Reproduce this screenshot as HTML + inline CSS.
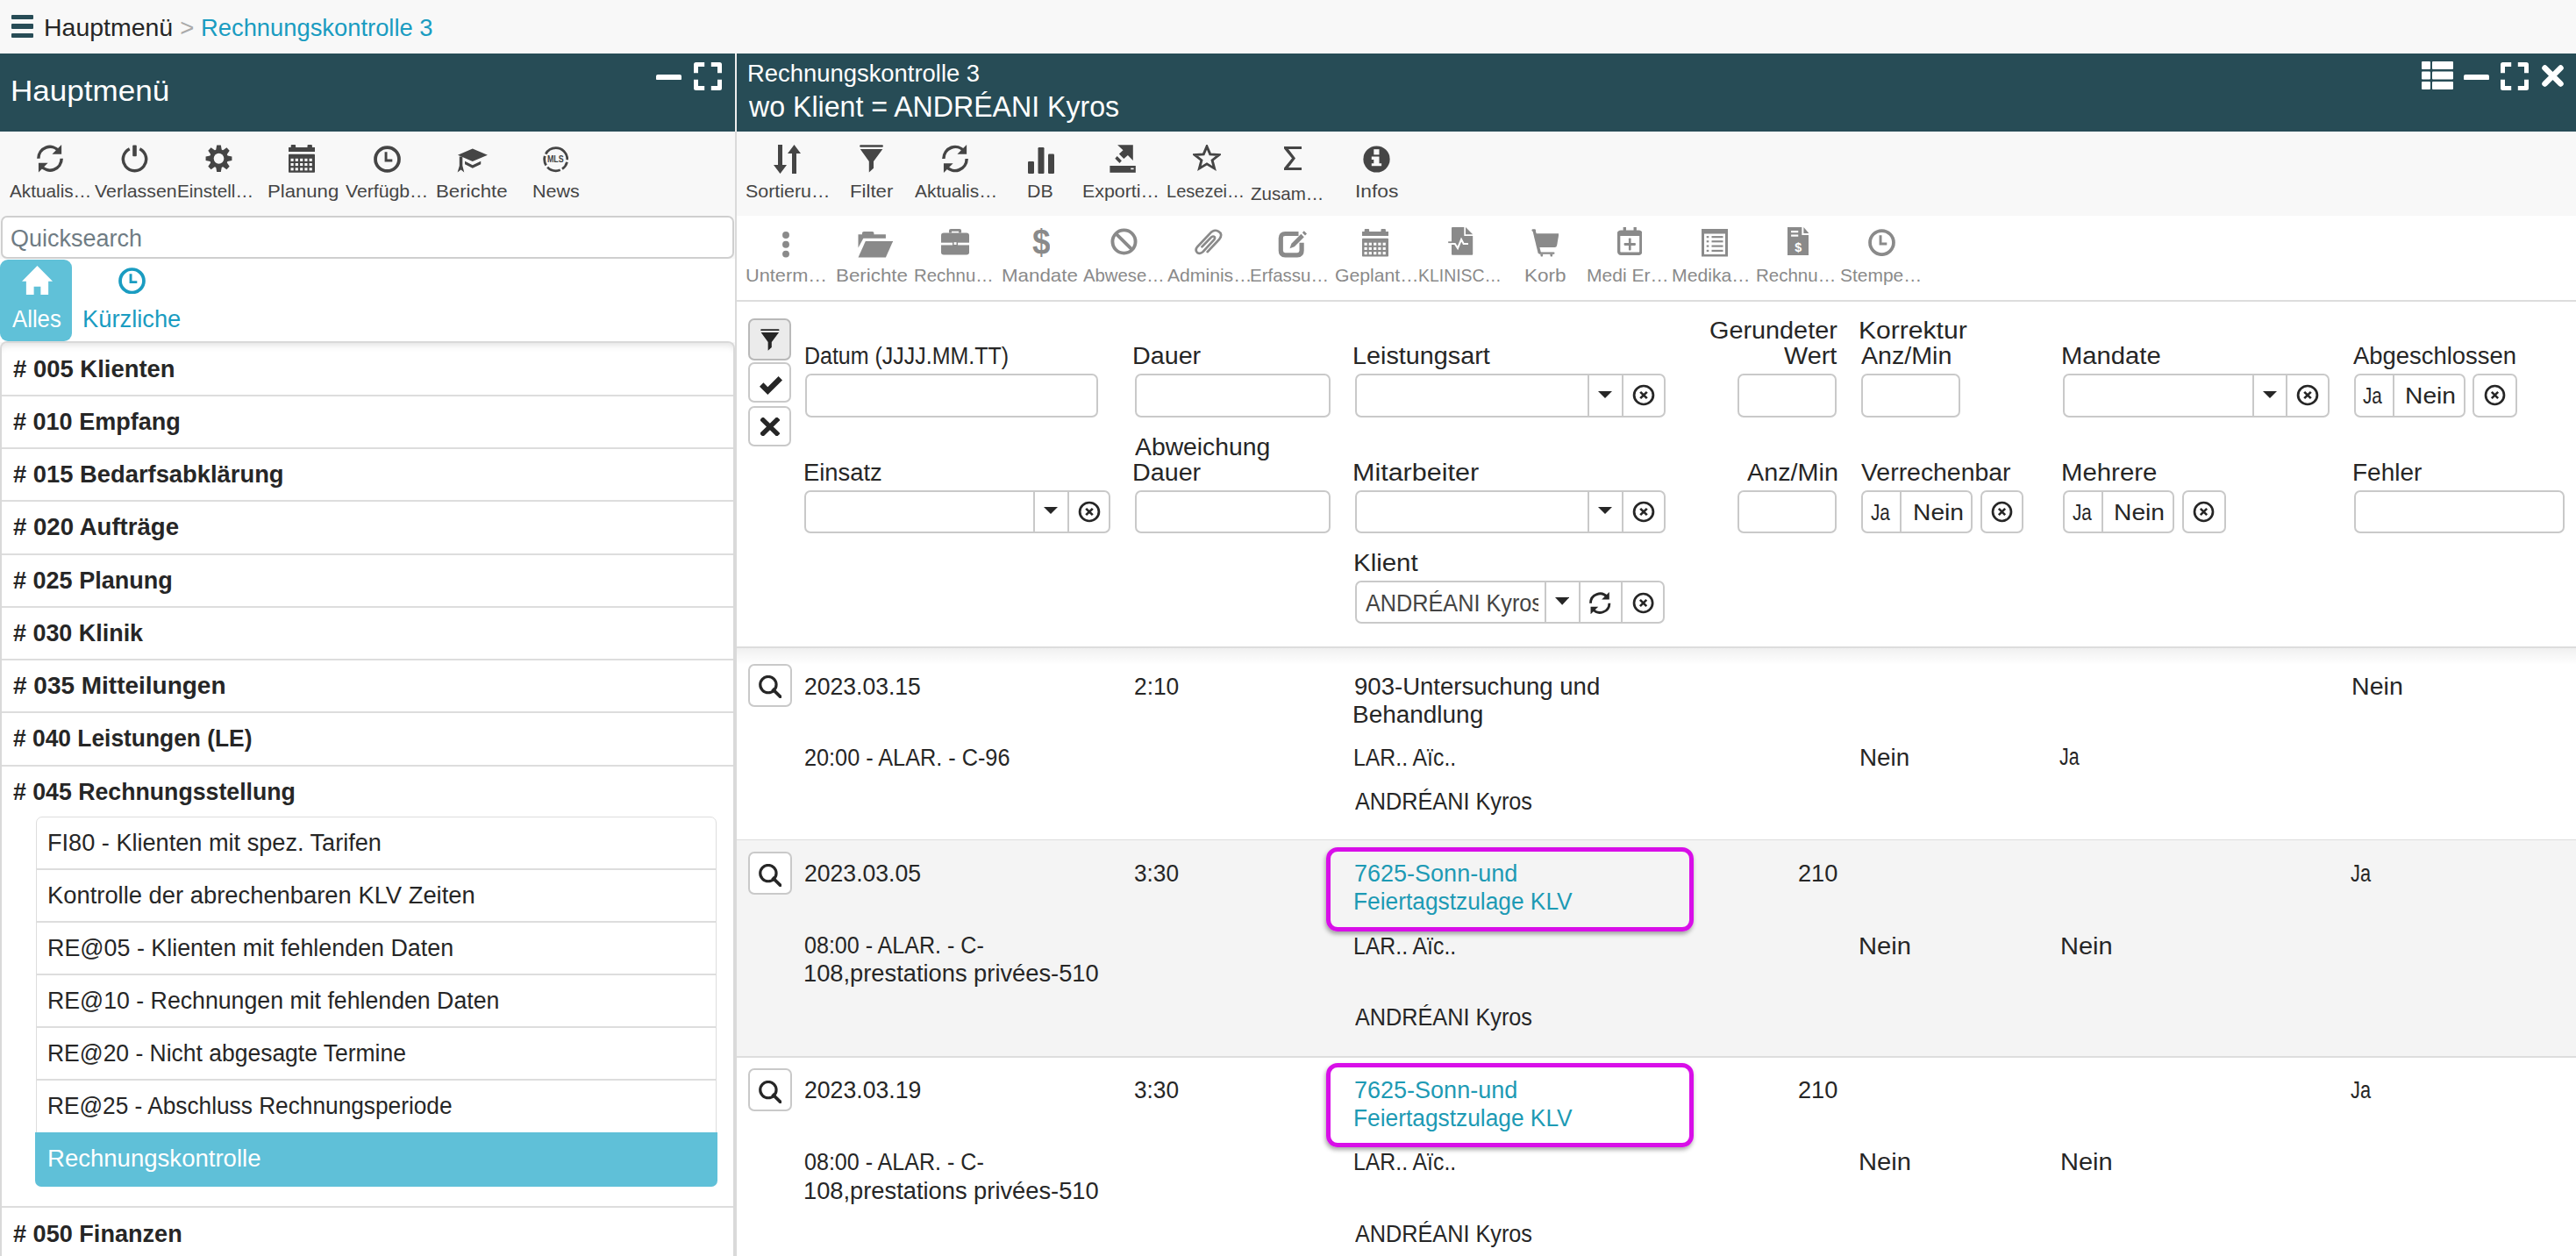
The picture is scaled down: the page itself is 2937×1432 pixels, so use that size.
<!DOCTYPE html>
<html><head><meta charset="utf-8"><title>Rechnungskontrolle 3</title>
<style>
html,body{margin:0;padding:0;}
body{width:2937px;height:1432px;overflow:hidden;position:relative;background:#f8f8f8;font-family:"Liberation Sans",sans-serif;}
.t{position:absolute;white-space:nowrap;}
.r{position:absolute;display:block;}
</style></head><body>
<div class="r" style="left:13.00px;top:17.00px;width:25.00px;height:5.00px;background:#274c56;border-radius:1px;"></div>
<div class="r" style="left:13.00px;top:27.00px;width:25.00px;height:5.50px;background:#274c56;border-radius:1px;"></div>
<div class="r" style="left:13.00px;top:37.50px;width:25.00px;height:5.20px;background:#274c56;border-radius:1px;"></div>
<div class="t" style="left:49.58px;top:17.54px;font-size:27.6px;line-height:27.6px;color:#262626;transform:scaleX(1.0318);transform-origin:0 0;">Hauptmenü</div>
<div class="t" style="left:205.25px;top:17.54px;font-size:27.6px;line-height:27.6px;color:#aaaaaa;transform:scaleX(1.0000);transform-origin:0 0;">&gt;</div>
<div class="t" style="left:229.27px;top:17.54px;font-size:27.6px;line-height:27.6px;color:#1a9cc1;transform:scaleX(0.9911);transform-origin:0 0;">Rechnungskontrolle 3</div>
<div class="r" style="left:0.00px;top:61.00px;width:838.00px;height:89.00px;background:#274c56;"></div>
<div class="t" style="left:11.86px;top:86.12px;font-size:34px;line-height:34px;color:#ffffff;transform:scaleX(1.0310);transform-origin:0 0;">Hauptmenü</div>
<svg class="r" style="left:748.00px;top:84.50px;width:29.00px;height:6.50px;" viewBox="0 0 29 6.5" preserveAspectRatio="none"><rect x="0" y="0" width="29" height="6.5" rx="2" fill="#fff"/></svg>
<svg class="r" style="left:791.00px;top:71.00px;width:32.00px;height:32.00px;" viewBox="0 0 32 32" preserveAspectRatio="none"><g fill="none" stroke="#fff" stroke-width="5" stroke-linecap="butt" stroke-linejoin="round"><path d="M2.5 12.2 V2.5 H12.2"/><path d="M19.8 2.5 H29.5 V12.2"/><path d="M2.5 19.8 V29.5 H12.2"/><path d="M19.8 29.5 H29.5 V19.8"/></g></svg>
<div class="r" style="left:838.00px;top:61.00px;width:2.00px;height:1371.00px;background:#dadada;"></div>
<div class="r" style="left:838.00px;top:61.00px;width:2.00px;height:89.00px;background:#eeeeee;"></div>
<div class="r" style="left:0.00px;top:150.00px;width:838.00px;height:240.00px;background:#f8f8f8;"></div>
<div class="r" style="left:0.00px;top:150.00px;width:838.00px;height:1.00px;background:#ffffff;"></div>
<svg class="r" style="left:42.00px;top:165.00px;width:31.00px;height:31.50px;" viewBox="0 0 32 32" preserveAspectRatio="none"><g fill="none" stroke="#454545" stroke-width="3.6"><path d="M1.9 16 A13.6 13.6 0 0 1 26 7.4"/><path d="M29.1 16 A13.6 13.6 0 0 1 5 24.6"/></g><path fill="#454545" d="M29 0 V10.8 H18 Z"/><path fill="#454545" d="M2 32 V21.2 H13 Z"/></svg>
<svg class="r" style="left:138.00px;top:164.50px;width:31.00px;height:32.00px;" viewBox="0 0 31 32" preserveAspectRatio="none"><path d="M9.7 4.7 A13.15 13.15 0 1 0 21.3 4.7" fill="none" stroke="#454545" stroke-width="3.5"/><rect x="13.2" y="0.6" width="4.6" height="12.6" rx="1" fill="#454545"/></svg>
<svg class="r" style="left:234.00px;top:165.00px;width:31.00px;height:31.50px;" viewBox="0 0 32 32" preserveAspectRatio="none"><g fill="#454545"><path d="M13.6 0.6 H18.4 L19.6 7 H12.4 Z M12.4 25 H19.6 L18.4 31.4 H13.6 Z" transform="rotate(0 16 16)"/><path d="M13.6 0.6 H18.4 L19.6 7 H12.4 Z M12.4 25 H19.6 L18.4 31.4 H13.6 Z" transform="rotate(45 16 16)"/><path d="M13.6 0.6 H18.4 L19.6 7 H12.4 Z M12.4 25 H19.6 L18.4 31.4 H13.6 Z" transform="rotate(90 16 16)"/><path d="M13.6 0.6 H18.4 L19.6 7 H12.4 Z M12.4 25 H19.6 L18.4 31.4 H13.6 Z" transform="rotate(135 16 16)"/><circle cx="16" cy="16" r="10.7"/></g><circle cx="16" cy="16" r="6" fill="#f8f8f8"/></svg>
<svg class="r" style="left:329.30px;top:165.00px;width:30.00px;height:32.00px;" viewBox="0 0 30 32" preserveAspectRatio="none"><g fill="#454545"><rect x="0" y="3" width="30" height="5" /><rect x="0" y="10.8" width="30" height="21" rx="0.8"/><rect x="2.7" y="0" width="5.4" height="4" rx="1"/><rect x="21.5" y="0" width="5.4" height="4" rx="1"/></g><g fill="#f8f8f8"><rect x="2.5" y="15.8" width="3.2" height="3.1"/><rect x="7.7" y="15.8" width="3.2" height="3.1"/><rect x="13.1" y="15.8" width="3.2" height="3.1"/><rect x="18.3" y="15.8" width="3.2" height="3.1"/><rect x="23.6" y="15.8" width="3.2" height="3.1"/><rect x="2.5" y="21.0" width="3.2" height="3.1"/><rect x="7.7" y="21.0" width="3.2" height="3.1"/><rect x="13.1" y="21.0" width="3.2" height="3.1"/><rect x="18.3" y="21.0" width="3.2" height="3.1"/><rect x="23.6" y="21.0" width="3.2" height="3.1"/><rect x="2.5" y="26.3" width="3.2" height="3.1"/><rect x="7.7" y="26.3" width="3.2" height="3.1"/><rect x="13.1" y="26.3" width="3.2" height="3.1"/><rect x="18.3" y="26.3" width="3.2" height="3.1"/><rect x="23.6" y="26.3" width="3.2" height="3.1"/></g></svg>
<svg class="r" style="left:426.00px;top:165.50px;width:31.00px;height:31.00px;" viewBox="0 0 32 32" preserveAspectRatio="none"><circle cx="16" cy="16" r="13.9" fill="none" stroke="#454545" stroke-width="3.9"/><path d="M14.5 7.5 V17.5 H22" fill="none" stroke="#454545" stroke-width="3"/></svg>
<svg class="r" style="left:521.00px;top:168.50px;width:35.00px;height:28.00px;" viewBox="0 0 36 28" preserveAspectRatio="none"><g fill="#454545"><path d="M18.3 0.4 L35.9 7.7 L18.3 15 L1 7.7 Z"/><path d="M9.3 14.7 L18.3 19.2 L28 14.7 V18.3 L18.3 22.8 L9.3 18.3 Z"/><path d="M2.9 9.5 H6.5 V19.9 L8.5 27.6 L4.7 24.5 L0.6 27.6 L2.9 19.9 Z"/></g></svg>
<svg class="r" style="left:618.50px;top:167.00px;width:29.50px;height:29.50px;" viewBox="0 0 30 30" preserveAspectRatio="none"><circle cx="15" cy="15" r="13.3" fill="none" stroke="#454545" stroke-width="2.8" stroke-dasharray="0.54 2.6 9.84 2.6 16.05 2.6 11.22 2.6 34.85 0"/><text x="14.6" y="18.6" font-family="Liberation Sans" font-weight="700" font-size="11.5" text-anchor="middle" fill="#454545" textLength="19" lengthAdjust="spacingAndGlyphs">MLS</text></svg>
<div class="t" style="left:11.40px;top:207.02px;font-size:21px;line-height:21px;color:#454545;transform:scaleX(0.9875);transform-origin:0 0;">Aktualis…</div>
<div class="t" style="left:107.60px;top:207.02px;font-size:21px;line-height:21px;color:#454545;transform:scaleX(1.0149);transform-origin:0 0;">Verlassen</div>
<div class="t" style="left:202.28px;top:207.02px;font-size:21px;line-height:21px;color:#454545;transform:scaleX(0.9816);transform-origin:0 0;">Einstell…</div>
<div class="t" style="left:305.16px;top:207.02px;font-size:21px;line-height:21px;color:#454545;transform:scaleX(1.0541);transform-origin:0 0;">Planung</div>
<div class="t" style="left:394.00px;top:207.02px;font-size:21px;line-height:21px;color:#454545;transform:scaleX(1.0094);transform-origin:0 0;">Verfügb…</div>
<div class="t" style="left:497.15px;top:207.02px;font-size:21px;line-height:21px;color:#454545;transform:scaleX(1.0586);transform-origin:0 0;">Berichte</div>
<div class="t" style="left:606.71px;top:207.02px;font-size:21px;line-height:21px;color:#454545;transform:scaleX(1.0240);transform-origin:0 0;">News</div>
<div class="r" style="left:1.00px;top:246.30px;width:836.00px;height:49.00px;background:#ffffff;box-sizing:border-box;border:2px solid #cfcfcf;border-radius:7px;"></div>
<div class="t" style="left:12.25px;top:259.04px;font-size:27px;line-height:27px;color:#6f7c84;transform:scaleX(0.9993);transform-origin:0 0;">Quicksearch</div>
<div class="r" style="left:0.00px;top:295.00px;width:838.00px;height:95.00px;background:#ffffff;"></div>
<div class="r" style="left:0.00px;top:296.00px;width:82.00px;height:92.50px;background:#60c1d8;border-radius:9px;"></div>
<svg class="r" style="left:25.00px;top:302.50px;width:35.00px;height:33.50px;" viewBox="0 0 36 34" preserveAspectRatio="none"><path fill="#ffffff" d="M18 0 L36 18 H31 V34 H22 V24 H14 V34 H5 V18 H0 Z"/></svg>
<div class="t" style="left:13.50px;top:351.04px;font-size:27px;line-height:27px;color:#ffffff;transform:scaleX(0.9530);transform-origin:0 0;">Alles</div>
<svg class="r" style="left:135.00px;top:304.50px;width:31.00px;height:30.50px;" viewBox="0 0 32 32" preserveAspectRatio="none"><circle cx="16" cy="16" r="13.9" fill="none" stroke="#1a9cc1" stroke-width="3.9"/><path d="M14.5 7.5 V17.5 H22" fill="none" stroke="#1a9cc1" stroke-width="3"/></svg>
<div class="t" style="left:94.02px;top:351.04px;font-size:27px;line-height:27px;color:#1a9cc1;transform:scaleX(1.0112);transform-origin:0 0;">Kürzliche</div>
<div class="r" style="left:0.00px;top:389.00px;width:838.00px;height:1051.00px;background:#ffffff;box-sizing:border-box;border:2px solid #d9d9d9;border-bottom:none;border-radius:8px 8px 0 0;box-shadow:inset 0 9px 9px -7px rgba(0,0,0,0.13);"></div>
<div class="t" style="left:14.99px;top:407.74px;font-size:27px;line-height:27px;color:#262626;transform:scaleX(1.0165);transform-origin:0 0;font-weight:700;"># 005 Klienten</div>
<div class="r" style="left:2.00px;top:449.75px;width:834.00px;height:2.20px;background:#dddddd;"></div>
<div class="t" style="left:15.00px;top:467.99px;font-size:27px;line-height:27px;color:#262626;transform:scaleX(1.0008);transform-origin:0 0;font-weight:700;"># 010 Empfang</div>
<div class="r" style="left:2.00px;top:510.00px;width:834.00px;height:2.20px;background:#dddddd;"></div>
<div class="t" style="left:14.99px;top:528.24px;font-size:27px;line-height:27px;color:#262626;transform:scaleX(1.0129);transform-origin:0 0;font-weight:700;"># 015 Bedarfsabklärung</div>
<div class="r" style="left:2.00px;top:570.25px;width:834.00px;height:2.20px;background:#dddddd;"></div>
<div class="t" style="left:14.99px;top:588.49px;font-size:27px;line-height:27px;color:#262626;transform:scaleX(1.0213);transform-origin:0 0;font-weight:700;"># 020 Aufträge</div>
<div class="r" style="left:2.00px;top:630.50px;width:834.00px;height:2.20px;background:#dddddd;"></div>
<div class="t" style="left:15.00px;top:648.74px;font-size:27px;line-height:27px;color:#262626;transform:scaleX(1.0014);transform-origin:0 0;font-weight:700;"># 025 Planung</div>
<div class="r" style="left:2.00px;top:690.75px;width:834.00px;height:2.20px;background:#dddddd;"></div>
<div class="t" style="left:15.00px;top:708.99px;font-size:27px;line-height:27px;color:#262626;transform:scaleX(0.9966);transform-origin:0 0;font-weight:700;"># 030 Klinik</div>
<div class="r" style="left:2.00px;top:751.00px;width:834.00px;height:2.20px;background:#dddddd;"></div>
<div class="t" style="left:14.98px;top:769.24px;font-size:27px;line-height:27px;color:#262626;transform:scaleX(1.0360);transform-origin:0 0;font-weight:700;"># 035 Mitteilungen</div>
<div class="r" style="left:2.00px;top:811.25px;width:834.00px;height:2.20px;background:#dddddd;"></div>
<div class="t" style="left:15.01px;top:829.49px;font-size:27px;line-height:27px;color:#262626;transform:scaleX(0.9764);transform-origin:0 0;font-weight:700;"># 040 Leistungen (LE)</div>
<div class="r" style="left:2.00px;top:871.50px;width:834.00px;height:2.20px;background:#dddddd;"></div>
<div class="t" style="left:15.01px;top:889.74px;font-size:27px;line-height:27px;color:#262626;transform:scaleX(0.9887);transform-origin:0 0;font-weight:700;"># 045 Rechnungsstellung</div>
<div class="r" style="left:40.80px;top:931.00px;width:776.20px;height:421.50px;background:#ffffff;box-sizing:border-box;border:1.5px solid #dddddd;border-radius:7px;"></div>
<div class="t" style="left:53.74px;top:948.34px;font-size:27px;line-height:27px;color:#262626;transform:scaleX(1.0047);transform-origin:0 0;">FI80 - Klienten mit spez. Tarifen</div>
<div class="r" style="left:41.50px;top:990.00px;width:774.50px;height:2.20px;background:#dddddd;"></div>
<div class="t" style="left:53.72px;top:1008.34px;font-size:27px;line-height:27px;color:#262626;transform:scaleX(1.0133);transform-origin:0 0;">Kontrolle der abrechenbaren KLV Zeiten</div>
<div class="r" style="left:41.50px;top:1050.00px;width:774.50px;height:2.20px;background:#dddddd;"></div>
<div class="t" style="left:53.76px;top:1068.34px;font-size:27px;line-height:27px;color:#262626;transform:scaleX(0.9945);transform-origin:0 0;">RE@05 - Klienten mit fehlenden Daten</div>
<div class="r" style="left:41.50px;top:1110.00px;width:774.50px;height:2.20px;background:#dddddd;"></div>
<div class="t" style="left:53.78px;top:1128.34px;font-size:27px;line-height:27px;color:#262626;transform:scaleX(0.9887);transform-origin:0 0;">RE@10 - Rechnungen mit fehlenden Daten</div>
<div class="r" style="left:41.50px;top:1170.00px;width:774.50px;height:2.20px;background:#dddddd;"></div>
<div class="t" style="left:53.79px;top:1188.34px;font-size:27px;line-height:27px;color:#262626;transform:scaleX(0.9804);transform-origin:0 0;">RE@20 - Nicht abgesagte Termine</div>
<div class="r" style="left:41.50px;top:1230.00px;width:774.50px;height:2.20px;background:#dddddd;"></div>
<div class="t" style="left:53.81px;top:1248.34px;font-size:27px;line-height:27px;color:#262626;transform:scaleX(0.9723);transform-origin:0 0;">RE@25 - Abschluss Rechnungsperiode</div>
<div class="r" style="left:40.00px;top:1291.00px;width:778.00px;height:61.50px;background:#5fc0d8;border-radius:0 0 7px 7px;"></div>
<div class="t" style="left:53.70px;top:1308.34px;font-size:27px;line-height:27px;color:#ffffff;transform:scaleX(1.0202);transform-origin:0 0;">Rechnungskontrolle</div>
<div class="r" style="left:2.00px;top:1375.00px;width:834.00px;height:2.20px;background:#dddddd;"></div>
<div class="t" style="left:15.10px;top:1394.04px;font-size:27px;line-height:27px;color:#262626;transform:scaleX(1.0034);transform-origin:0 0;font-weight:700;"># 050 Finanzen</div>
<div class="r" style="left:840.00px;top:61.00px;width:2097.00px;height:89.00px;background:#274c56;"></div>
<div class="t" style="left:852.02px;top:71.14px;font-size:27px;line-height:27px;color:#ffffff;transform:scaleX(1.0149);transform-origin:0 0;">Rechnungskontrolle 3</div>
<div class="t" style="left:853.90px;top:104.67px;font-size:33px;line-height:33px;color:#ffffff;transform:scaleX(0.9732);transform-origin:0 0;">wo Klient = ANDRÉANI Kyros</div>
<svg class="r" style="left:2761.00px;top:70.00px;width:36.00px;height:32.00px;" viewBox="0 0 36 32" preserveAspectRatio="none"><g fill="#fff"><rect x="0" y="0" width="10" height="9" rx="1"/><rect x="12" y="0" width="24" height="9" rx="1"/><rect x="0" y="11.5" width="10" height="9" rx="1"/><rect x="12" y="11.5" width="24" height="9" rx="1"/><rect x="0" y="23" width="10" height="9" rx="1"/><rect x="12" y="23" width="24" height="9" rx="1"/></g></svg>
<svg class="r" style="left:2809.00px;top:84.80px;width:29.00px;height:6.50px;" viewBox="0 0 29 6.5" preserveAspectRatio="none"><rect x="0" y="0" width="29" height="6.5" rx="2" fill="#fff"/></svg>
<svg class="r" style="left:2851.00px;top:71.00px;width:32.00px;height:32.00px;" viewBox="0 0 32 32" preserveAspectRatio="none"><g fill="none" stroke="#fff" stroke-width="5" stroke-linecap="butt" stroke-linejoin="round"><path d="M2.5 12.2 V2.5 H12.2"/><path d="M19.8 2.5 H29.5 V12.2"/><path d="M2.5 19.8 V29.5 H12.2"/><path d="M19.8 29.5 H29.5 V19.8"/></g></svg>
<svg class="r" style="left:2897.50px;top:74.30px;width:25.00px;height:25.00px;" viewBox="0 0 25 25" preserveAspectRatio="none"><path d="M3.5 3.5 L21.5 21.5 M21.5 3.5 L3.5 21.5" stroke="#fff" stroke-width="6.5" stroke-linecap="round"/></svg>
<div class="r" style="left:840.00px;top:150.00px;width:2097.00px;height:96.00px;background:#f8f8f8;"></div>
<div class="r" style="left:840.00px;top:150.00px;width:2097.00px;height:1.00px;background:#ffffff;"></div>
<svg class="r" style="left:882.00px;top:164.50px;width:31.00px;height:33.00px;" viewBox="0 0 31 33" preserveAspectRatio="none"><g fill="#454545"><path d="M5 0 H10 V23 H15 L7.5 33 L0 23 H5 Z"/><path d="M21 33 H26 V10 H31 L23.5 0 L16 10 H21 Z"/></g></svg>
<svg class="r" style="left:980.00px;top:165.00px;width:27.00px;height:33.00px;" viewBox="0 0 27 33" preserveAspectRatio="none"><g fill="#454545"><rect x="0.2" y="0.3" width="26.7" height="2.4" rx="1.2"/><path d="M0.8 5.1 H26.3 L16 19 V26.7 L10.8 31.5 V19 Z"/></g></svg>
<svg class="r" style="left:1074.00px;top:165.00px;width:31.00px;height:32.00px;" viewBox="0 0 32 32" preserveAspectRatio="none"><g fill="none" stroke="#454545" stroke-width="3.6"><path d="M1.9 16 A13.6 13.6 0 0 1 26 7.4"/><path d="M29.1 16 A13.6 13.6 0 0 1 5 24.6"/></g><path fill="#454545" d="M29 0 V10.8 H18 Z"/><path fill="#454545" d="M2 32 V21.2 H13 Z"/></svg>
<svg class="r" style="left:1172.00px;top:167.50px;width:30.00px;height:30.00px;" viewBox="0 0 30 32" preserveAspectRatio="none"><g fill="#454545"><rect x="0" y="17" width="7" height="15" rx="1.2"/><rect x="11.5" y="0" width="7" height="32" rx="1.2"/><rect x="23" y="8" width="7" height="24" rx="1.2"/></g></svg>
<svg class="r" style="left:1265.00px;top:165.00px;width:30.00px;height:32.00px;" viewBox="0 0 30 32" preserveAspectRatio="none"><g fill="#454545"><rect x="0.4" y="24" width="29.4" height="7.8"/><path d="M9.1 0.2 H26.8 V17.9 L20.9 11.9 L16.3 15.9 L10.9 10.5 L15.5 6.3 Z"/><path d="M8.7 13.1 L13.9 18.3 L11.5 20.9 L6.3 15.7 Z"/></g><rect x="24.2" y="26.6" width="3.4" height="1.6" fill="#f8f8f8"/></svg>
<svg class="r" style="left:1360.00px;top:165.00px;width:32.00px;height:30.50px;" viewBox="0 0 32 32" preserveAspectRatio="none"><polygon points="16.00,2.00 19.76,11.42 29.89,12.09 22.09,18.58 24.58,28.41 16.00,23.00 7.42,28.41 9.91,18.58 2.11,12.09 12.24,11.42" fill="none" stroke="#454545" stroke-width="2.9" stroke-linejoin="miter" stroke-miterlimit="10"/></svg>
<svg class="r" style="left:1464.00px;top:167.00px;width:20.00px;height:27.00px;" viewBox="0 0 20 27" preserveAspectRatio="none"><path fill="#454545" d="M0 0 H20 V3 H5 L13 13.5 L5 24 H20 V27 H0 V24.5 L9 13.5 L0 2.5 Z"/></svg>
<svg class="r" style="left:1554.00px;top:165.50px;width:31.00px;height:31.00px;" viewBox="0 0 32 32" preserveAspectRatio="none"><circle cx="16" cy="16" r="15.6" fill="#454545"/><rect x="12.7" y="4.3" width="6.4" height="6.4" fill="#f8f8f8"/><path fill="#f8f8f8" d="M10.1 12.8 H19.1 V20.8 H21.8 V24 H10.1 V20.8 H12.7 V16.4 H10.1 Z"/></svg>
<div class="t" style="left:849.98px;top:207.22px;font-size:21px;line-height:21px;color:#454545;transform:scaleX(1.0193);transform-origin:0 0;">Sortieru…</div>
<div class="t" style="left:968.55px;top:207.22px;font-size:21px;line-height:21px;color:#454545;transform:scaleX(1.0570);transform-origin:0 0;">Filter</div>
<div class="t" style="left:1043.00px;top:207.22px;font-size:21px;line-height:21px;color:#454545;transform:scaleX(0.9951);transform-origin:0 0;">Aktualis…</div>
<div class="t" style="left:1170.82px;top:207.22px;font-size:21px;line-height:21px;color:#454545;transform:scaleX(1.0151);transform-origin:0 0;">DB</div>
<div class="t" style="left:1233.72px;top:207.22px;font-size:21px;line-height:21px;color:#454545;transform:scaleX(1.0165);transform-origin:0 0;">Exporti…</div>
<div class="t" style="left:1330.03px;top:207.22px;font-size:21px;line-height:21px;color:#454545;transform:scaleX(0.9528);transform-origin:0 0;">Lesezei…</div>
<div class="t" style="left:1426.27px;top:210.22px;font-size:21px;line-height:21px;color:#454545;transform:scaleX(0.9786);transform-origin:0 0;">Zusam…</div>
<div class="t" style="left:1544.83px;top:207.22px;font-size:21px;line-height:21px;color:#454545;transform:scaleX(1.0854);transform-origin:0 0;">Infos</div>
<div class="r" style="left:840.00px;top:246.00px;width:2097.00px;height:96.00px;background:#ffffff;"></div>
<div class="r" style="left:840.00px;top:342.00px;width:2097.00px;height:2.00px;background:#dddddd;"></div>
<svg class="r" style="left:892.00px;top:263.60px;width:8.00px;height:30.00px;" viewBox="0 0 8 30" preserveAspectRatio="none"><g fill="#8a8a8a"><circle cx="4" cy="4" r="3.95"/><circle cx="4" cy="14.8" r="3.95"/><circle cx="4" cy="25.6" r="3.95"/></g></svg>
<svg class="r" style="left:977.50px;top:263.50px;width:40.50px;height:30.00px;" viewBox="0 0 40.5 30" preserveAspectRatio="none"><g fill="#8a8a8a"><path d="M0.5 3.2 H5 V1.5 Q5 0 7 0 H16.5 Q18.4 0 18.4 1.5 V3.2 H31.9 V7.7 H6.3 L0.5 18.6 Z"/><path d="M8.8 10.9 H40.2 L31.9 29.5 H0.5 Z"/></g></svg>
<svg class="r" style="left:1073.40px;top:261.00px;width:32.10px;height:29.50px;" viewBox="0 0 32 32" preserveAspectRatio="none"><g fill="#8a8a8a"><path d="M11 0 H21 Q23 0 23 2 V5 H20 V3 H12 V5 H9 V2 Q9 0 11 0 Z"/><rect x="0" y="5" width="32" height="27" rx="3"/></g><rect x="0" y="17" width="32" height="3" fill="#ffffff"/><rect x="13" y="15" width="6" height="6" fill="#8a8a8a"/><rect x="14.5" y="16.5" width="3" height="3" fill="#ffffff"/></svg>
<svg class="r" style="left:1176.50px;top:259.80px;width:20.50px;height:33.60px;" viewBox="0 0 20 32" preserveAspectRatio="none"><text x="10" y="29" font-family="Liberation Sans" font-weight="700" font-size="38" text-anchor="middle" fill="#8a8a8a" textLength="20" lengthAdjust="spacingAndGlyphs">$</text></svg>
<svg class="r" style="left:1266.00px;top:259.50px;width:31.00px;height:31.00px;" viewBox="0 0 32 32" preserveAspectRatio="none"><circle cx="16" cy="16" r="13.5" fill="none" stroke="#8a8a8a" stroke-width="4"/><path d="M6.5 6.5 L25.5 25.5" stroke="#8a8a8a" stroke-width="4"/></svg>
<svg class="r" style="left:1360.50px;top:261.00px;width:33.50px;height:30.00px;" viewBox="0 0 32 31" preserveAspectRatio="none"><path d="M15 27 L28 12 Q32 6 27 3 Q22 0 18 5 L4 21 Q1 25 4 28 Q7 30 10 27 L22 13 Q24 10 22 9 Q20 8 18 11 L9 21" fill="none" stroke="#8a8a8a" stroke-width="2.6" stroke-linecap="round"/></svg>
<svg class="r" style="left:1457.00px;top:262.50px;width:33.00px;height:31.00px;" viewBox="0 0 33 31" preserveAspectRatio="none"><path d="M23.5 3.5 H8.3 Q3.3 3.5 3.3 8.5 V22.8 Q3.3 27.8 8.3 27.8 H22.1 Q27.1 27.8 27.1 22.8 V13.8" fill="none" stroke="#8a8a8a" stroke-width="5.2"/><path fill="#8a8a8a" d="M13.5 20.2 L15.4 14.8 L26.4 3.8 L29.8 7.2 L18.8 18.2 Z"/><path fill="#8a8a8a" d="M27.8 2.2 L29.8 0.2 L33 3.4 L31 5.4 Z"/></svg>
<svg class="r" style="left:1553.20px;top:261.20px;width:30.00px;height:31.80px;" viewBox="0 0 30 32" preserveAspectRatio="none"><g fill="#8a8a8a"><rect x="0" y="3" width="30" height="5" /><rect x="0" y="10.8" width="30" height="21" rx="0.8"/><rect x="2.7" y="0" width="5.4" height="4" rx="1"/><rect x="21.5" y="0" width="5.4" height="4" rx="1"/></g><g fill="#ffffff"><rect x="2.5" y="15.8" width="3.2" height="3.1"/><rect x="7.7" y="15.8" width="3.2" height="3.1"/><rect x="13.1" y="15.8" width="3.2" height="3.1"/><rect x="18.3" y="15.8" width="3.2" height="3.1"/><rect x="23.6" y="15.8" width="3.2" height="3.1"/><rect x="2.5" y="21.0" width="3.2" height="3.1"/><rect x="7.7" y="21.0" width="3.2" height="3.1"/><rect x="13.1" y="21.0" width="3.2" height="3.1"/><rect x="18.3" y="21.0" width="3.2" height="3.1"/><rect x="23.6" y="21.0" width="3.2" height="3.1"/><rect x="2.5" y="26.3" width="3.2" height="3.1"/><rect x="7.7" y="26.3" width="3.2" height="3.1"/><rect x="13.1" y="26.3" width="3.2" height="3.1"/><rect x="18.3" y="26.3" width="3.2" height="3.1"/><rect x="23.6" y="26.3" width="3.2" height="3.1"/></g></svg>
<svg class="r" style="left:1651.40px;top:259.00px;width:29.00px;height:32.00px;" viewBox="0 0 29 32" preserveAspectRatio="none"><path fill="#8a8a8a" d="M4 1 Q4 0 5 0 H18.3 V9.9 H28.2 V30.7 Q28.2 31.7 27.2 31.7 H5 Q4 31.7 4 30.7 Z"/><path fill="#8a8a8a" d="M20 0 L28.2 8.2 H20 Z"/><polyline points="3.5,19 7.8,19 11,24 15.1,14 17.7,19 23,19" fill="none" stroke="#ffffff" stroke-width="2.1"/><rect x="0.2" y="16.3" width="4.2" height="1.8" fill="#8a8a8a"/></svg>
<svg class="r" style="left:1745.50px;top:261.00px;width:31.50px;height:31.50px;" viewBox="0 0 32 32" preserveAspectRatio="none"><g fill="#8a8a8a"><rect x="0.5" y="0.3" width="4.5" height="2.4" rx="1.2"/><path d="M4 5.4 H31.9 L29.6 19 Q29.2 21.3 27 21.3 H8 Z"/><rect x="8.5" y="26.9" width="18.4" height="2.4" rx="1"/><path d="M10.3 29.3 H13.5 L12.9 32 H11 Z M21.5 29.3 H24.7 L24.1 32 H22.2 Z"/></g><path d="M3 1.4 L9.5 28" stroke="#8a8a8a" stroke-width="3.4"/></svg>
<svg class="r" style="left:1843.50px;top:259.00px;width:28.50px;height:32.00px;" viewBox="0 0 30 32" preserveAspectRatio="none"><rect x="1.75" y="5.25" width="26.5" height="25" rx="2.5" fill="none" stroke="#8a8a8a" stroke-width="3.5"/><g fill="#8a8a8a"><rect x="7" y="0" width="3.5" height="7"/><rect x="19.5" y="0" width="3.5" height="7"/><rect x="0" y="4.5" width="30" height="5.5" rx="2"/><rect x="13.6" y="12.5" width="2.8" height="14" rx="0.8"/><rect x="8" y="18.1" width="14" height="2.8" rx="0.8"/></g></svg>
<svg class="r" style="left:1940.00px;top:261.00px;width:30.00px;height:31.50px;" viewBox="0 0 30 32" preserveAspectRatio="none"><g fill="#8a8a8a"><path fill-rule="evenodd" d="M0 0 H30 V32 H0 Z M3 5.5 V29.5 H27 V5.5 Z"/><rect x="5.7" y="8.2" width="2.6" height="2.2"/><rect x="11.5" y="8.2" width="13" height="2.2"/><rect x="5.7" y="13.4" width="2.6" height="2.2"/><rect x="11.5" y="13.4" width="13" height="2.2"/><rect x="5.7" y="18.8" width="2.6" height="2.2"/><rect x="11.5" y="18.8" width="13" height="2.2"/><rect x="5.7" y="24.2" width="2.6" height="2.2"/><rect x="11.5" y="24.2" width="13" height="2.2"/></g></svg>
<svg class="r" style="left:2037.50px;top:259.00px;width:24.50px;height:32.00px;" viewBox="0 0 24 32" preserveAspectRatio="none"><path fill="#8a8a8a" d="M0 0 H16 V9 H24 V32 H0 Z"/><path fill="#8a8a8a" d="M18 0 L24 7 H18 Z"/><g fill="#ffffff"><rect x="4" y="4" width="8" height="2.2"/><rect x="4" y="8.5" width="8" height="2.2"/></g><text x="12" y="28" font-family="Liberation Sans" font-weight="700" font-size="14" text-anchor="middle" fill="#ffffff">$</text></svg>
<svg class="r" style="left:2130.00px;top:261.30px;width:31.00px;height:31.20px;" viewBox="0 0 32 32" preserveAspectRatio="none"><circle cx="16" cy="16" r="13.9" fill="none" stroke="#8a8a8a" stroke-width="3.9"/><path d="M14.5 7.5 V17.5 H22" fill="none" stroke="#8a8a8a" stroke-width="3"/></svg>
<div class="t" style="left:849.85px;top:303.02px;font-size:21px;line-height:21px;color:#8a8a8a;transform:scaleX(1.0363);transform-origin:0 0;">Unterm…</div>
<div class="t" style="left:953.14px;top:303.02px;font-size:21px;line-height:21px;color:#8a8a8a;transform:scaleX(1.0640);transform-origin:0 0;">Berichte</div>
<div class="t" style="left:1042.10px;top:303.02px;font-size:21px;line-height:21px;color:#8a8a8a;transform:scaleX(0.9708);transform-origin:0 0;">Rechnu…</div>
<div class="t" style="left:1142.14px;top:303.02px;font-size:21px;line-height:21px;color:#8a8a8a;transform:scaleX(1.0633);transform-origin:0 0;">Mandate</div>
<div class="t" style="left:1235.00px;top:303.02px;font-size:21px;line-height:21px;color:#8a8a8a;transform:scaleX(0.9677);transform-origin:0 0;">Abwese…</div>
<div class="t" style="left:1331.00px;top:303.02px;font-size:21px;line-height:21px;color:#8a8a8a;transform:scaleX(1.0065);transform-origin:0 0;">Adminis…</div>
<div class="t" style="left:1425.29px;top:303.02px;font-size:21px;line-height:21px;color:#8a8a8a;transform:scaleX(0.9766);transform-origin:0 0;">Erfassu…</div>
<div class="t" style="left:1521.99px;top:303.02px;font-size:21px;line-height:21px;color:#8a8a8a;transform:scaleX(1.0094);transform-origin:0 0;">Geplant…</div>
<div class="t" style="left:1617.08px;top:303.02px;font-size:21px;line-height:21px;color:#8a8a8a;transform:scaleX(0.9242);transform-origin:0 0;">KLINISC…</div>
<div class="t" style="left:1737.93px;top:303.02px;font-size:21px;line-height:21px;color:#8a8a8a;transform:scaleX(1.0707);transform-origin:0 0;">Korb</div>
<div class="t" style="left:1809.05px;top:303.02px;font-size:21px;line-height:21px;color:#8a8a8a;transform:scaleX(1.0028);transform-origin:0 0;">Medi Er…</div>
<div class="t" style="left:1905.73px;top:303.02px;font-size:21px;line-height:21px;color:#8a8a8a;transform:scaleX(1.0089);transform-origin:0 0;">Medika…</div>
<div class="t" style="left:2001.69px;top:303.02px;font-size:21px;line-height:21px;color:#8a8a8a;transform:scaleX(0.9764);transform-origin:0 0;">Rechnu…</div>
<div class="t" style="left:2097.50px;top:303.02px;font-size:21px;line-height:21px;color:#8a8a8a;transform:scaleX(0.9972);transform-origin:0 0;">Stempe…</div>
<div class="r" style="left:840.00px;top:344.00px;width:2097.00px;height:393.00px;background:#ffffff;"></div>
<div class="r" style="left:840.00px;top:737.00px;width:2097.00px;height:1.60px;background:#dddddd;"></div>
<div class="r" style="left:853.40px;top:363.00px;width:48.60px;height:48.00px;background:#ebebeb;box-sizing:border-box;border:2.2px solid #b9b9b9;border-radius:7px;"></div>
<div class="r" style="left:853.40px;top:413.00px;width:48.60px;height:46.30px;background:#ffffff;box-sizing:border-box;border:2px solid #c9c9c9;border-radius:7px;"></div>
<div class="r" style="left:853.40px;top:462.50px;width:48.60px;height:46.50px;background:#ffffff;box-sizing:border-box;border:2px solid #c9c9c9;border-radius:7px;"></div>
<svg class="r" style="left:867.00px;top:374.80px;width:21.60px;height:25.90px;" viewBox="0 0 27 33" preserveAspectRatio="none"><g fill="#262626"><rect x="0.2" y="0.3" width="26.7" height="2.4" rx="1.2"/><path d="M0.8 5.1 H26.3 L16 19 V26.7 L10.8 31.5 V19 Z"/></g></svg>
<svg class="r" style="left:866.00px;top:427.50px;width:26.00px;height:22.00px;" viewBox="0 0 26.5 22.5" preserveAspectRatio="none"><path fill="#262626" d="M0 13 L4.5 8.5 L9.5 13.5 L22 1 L26.5 5.5 L9.5 22.5 Z"/></svg>
<svg class="r" style="left:867.00px;top:475.70px;width:21.60px;height:21.10px;" viewBox="0 0 22 22" preserveAspectRatio="none"><path d="M3 3 L19 19 M19 3 L3 19" stroke="#262626" stroke-width="5.6" stroke-linecap="square"/></svg>
<div class="t" style="left:916.52px;top:392.74px;font-size:27px;line-height:27px;color:#262626;transform:scaleX(0.9250);transform-origin:0 0;">Datum (JJJJ.MM.TT)</div>
<div class="t" style="left:1291.31px;top:392.74px;font-size:27px;line-height:27px;color:#262626;transform:scaleX(1.0629);transform-origin:0 0;">Dauer</div>
<div class="t" style="left:1542.20px;top:392.74px;font-size:27px;line-height:27px;color:#262626;transform:scaleX(1.0657);transform-origin:0 0;">Leistungsart</div>
<div class="t" style="left:1949.27px;top:363.94px;font-size:27px;line-height:27px;color:#262626;transform:scaleX(1.0672);transform-origin:0 0;">Gerundeter</div>
<div class="t" style="left:2034.43px;top:392.74px;font-size:27px;line-height:27px;color:#262626;transform:scaleX(1.0661);transform-origin:0 0;">Wert</div>
<div class="t" style="left:2119.39px;top:363.94px;font-size:27px;line-height:27px;color:#262626;transform:scaleX(1.1141);transform-origin:0 0;">Korrektur</div>
<div class="t" style="left:2121.90px;top:392.74px;font-size:27px;line-height:27px;color:#262626;transform:scaleX(1.0601);transform-origin:0 0;">Anz/Min</div>
<div class="t" style="left:2349.57px;top:392.74px;font-size:27px;line-height:27px;color:#262626;transform:scaleX(1.0818);transform-origin:0 0;">Mandate</div>
<div class="t" style="left:2682.80px;top:392.74px;font-size:27px;line-height:27px;color:#262626;transform:scaleX(1.0152);transform-origin:0 0;">Abgeschlossen</div>
<div class="t" style="left:916.32px;top:525.74px;font-size:27px;line-height:27px;color:#262626;transform:scaleX(1.0141);transform-origin:0 0;">Einsatz</div>
<div class="t" style="left:1293.70px;top:496.94px;font-size:27px;line-height:27px;color:#262626;transform:scaleX(1.0485);transform-origin:0 0;">Abweichung</div>
<div class="t" style="left:1291.31px;top:525.74px;font-size:27px;line-height:27px;color:#262626;transform:scaleX(1.0629);transform-origin:0 0;">Dauer</div>
<div class="t" style="left:1542.06px;top:525.74px;font-size:27px;line-height:27px;color:#262626;transform:scaleX(1.1295);transform-origin:0 0;">Mitarbeiter</div>
<div class="t" style="left:1991.70px;top:525.74px;font-size:27px;line-height:27px;color:#262626;transform:scaleX(1.0653);transform-origin:0 0;">Anz/Min</div>
<div class="t" style="left:2121.64px;top:525.74px;font-size:27px;line-height:27px;color:#262626;transform:scaleX(1.0518);transform-origin:0 0;">Verrechenbar</div>
<div class="t" style="left:2349.55px;top:525.74px;font-size:27px;line-height:27px;color:#262626;transform:scaleX(1.0876);transform-origin:0 0;">Mehrere</div>
<div class="t" style="left:2681.67px;top:525.74px;font-size:27px;line-height:27px;color:#262626;transform:scaleX(1.0359);transform-origin:0 0;">Fehler</div>
<div class="t" style="left:1542.85px;top:628.94px;font-size:27px;line-height:27px;color:#262626;transform:scaleX(1.0908);transform-origin:0 0;">Klient</div>
<div class="r" style="left:917.70px;top:426.10px;width:334.80px;height:49.70px;background:#ffffff;box-sizing:border-box;border:2px solid #c9c9c9;border-radius:7px;"></div>
<div class="r" style="left:1293.70px;top:426.10px;width:223.60px;height:49.70px;background:#ffffff;box-sizing:border-box;border:2px solid #c9c9c9;border-radius:7px;"></div>
<div class="r" style="left:1544.60px;top:426.10px;width:354.00px;height:49.70px;background:#ffffff;box-sizing:border-box;border:2px solid #c9c9c9;border-radius:7px;"></div>
<div class="r" style="left:1810.00px;top:426.10px;width:2.00px;height:49.70px;background:#c9c9c9;"></div>
<div class="r" style="left:1848.50px;top:426.10px;width:2.00px;height:49.70px;background:#c9c9c9;"></div>
<svg class="r" style="left:1822.25px;top:445.65px;width:16.00px;height:8.00px;" viewBox="0 0 16 9" preserveAspectRatio="none"><path fill="#262626" d="M0 0 H16 L8 9 Z"/></svg>
<svg class="r" style="left:1861.05px;top:438.45px;width:26.00px;height:25.00px;" viewBox="0 0 26 26" preserveAspectRatio="none"><circle cx="13" cy="13" r="10.9" fill="none" stroke="#262626" stroke-width="2.8"/><path d="M9.2 9.2 L16.8 16.8 M16.8 9.2 L9.2 16.8" stroke="#262626" stroke-width="2.7"/></svg>
<div class="r" style="left:1981.00px;top:426.10px;width:113.40px;height:49.70px;background:#ffffff;box-sizing:border-box;border:2px solid #c9c9c9;border-radius:7px;"></div>
<div class="r" style="left:2121.90px;top:426.10px;width:113.40px;height:49.70px;background:#ffffff;box-sizing:border-box;border:2px solid #c9c9c9;border-radius:7px;"></div>
<div class="r" style="left:2352.00px;top:426.10px;width:303.80px;height:49.70px;background:#ffffff;box-sizing:border-box;border:2px solid #c9c9c9;border-radius:7px;"></div>
<div class="r" style="left:2567.60px;top:426.10px;width:2.00px;height:49.70px;background:#c9c9c9;"></div>
<div class="r" style="left:2606.00px;top:426.10px;width:2.00px;height:49.70px;background:#c9c9c9;"></div>
<svg class="r" style="left:2579.80px;top:445.65px;width:16.00px;height:8.00px;" viewBox="0 0 16 9" preserveAspectRatio="none"><path fill="#262626" d="M0 0 H16 L8 9 Z"/></svg>
<svg class="r" style="left:2618.40px;top:438.45px;width:26.00px;height:25.00px;" viewBox="0 0 26 26" preserveAspectRatio="none"><circle cx="13" cy="13" r="10.9" fill="none" stroke="#262626" stroke-width="2.8"/><path d="M9.2 9.2 L16.8 16.8 M16.8 9.2 L9.2 16.8" stroke="#262626" stroke-width="2.7"/></svg>
<div class="r" style="left:2683.50px;top:426.10px;width:127.50px;height:49.70px;background:#ffffff;box-sizing:border-box;border:2px solid #c9c9c9;border-radius:7px;"></div>
<div class="r" style="left:2728.00px;top:426.10px;width:2.00px;height:49.70px;background:#c9c9c9;"></div>
<div class="t" style="left:2694.10px;top:437.79px;font-size:26px;line-height:26px;color:#262626;transform:scaleX(0.7963);transform-origin:0 0;">Ja</div>
<div class="t" style="left:2742.33px;top:437.79px;font-size:26px;line-height:26px;color:#262626;transform:scaleX(1.0854);transform-origin:0 0;">Nein</div>
<div class="r" style="left:2819.00px;top:426.10px;width:50.60px;height:49.70px;background:#ffffff;box-sizing:border-box;border:2px solid #c9c9c9;border-radius:7px;"></div>
<svg class="r" style="left:2831.80px;top:438.45px;width:25.00px;height:25.00px;" viewBox="0 0 26 26" preserveAspectRatio="none"><circle cx="13" cy="13" r="10.9" fill="none" stroke="#262626" stroke-width="2.8"/><path d="M9.2 9.2 L16.8 16.8 M16.8 9.2 L9.2 16.8" stroke="#262626" stroke-width="2.7"/></svg>
<div class="r" style="left:917.40px;top:559.20px;width:349.10px;height:48.40px;background:#ffffff;box-sizing:border-box;border:2px solid #c9c9c9;border-radius:7px;"></div>
<div class="r" style="left:1178.00px;top:559.20px;width:2.00px;height:48.40px;background:#c9c9c9;"></div>
<div class="r" style="left:1216.90px;top:559.20px;width:2.00px;height:48.40px;background:#c9c9c9;"></div>
<svg class="r" style="left:1190.45px;top:578.10px;width:16.00px;height:8.00px;" viewBox="0 0 16 9" preserveAspectRatio="none"><path fill="#262626" d="M0 0 H16 L8 9 Z"/></svg>
<svg class="r" style="left:1229.20px;top:570.90px;width:26.00px;height:25.00px;" viewBox="0 0 26 26" preserveAspectRatio="none"><circle cx="13" cy="13" r="10.9" fill="none" stroke="#262626" stroke-width="2.8"/><path d="M9.2 9.2 L16.8 16.8 M16.8 9.2 L9.2 16.8" stroke="#262626" stroke-width="2.7"/></svg>
<div class="r" style="left:1293.70px;top:559.20px;width:223.60px;height:48.40px;background:#ffffff;box-sizing:border-box;border:2px solid #c9c9c9;border-radius:7px;"></div>
<div class="r" style="left:1544.60px;top:559.20px;width:354.00px;height:48.40px;background:#ffffff;box-sizing:border-box;border:2px solid #c9c9c9;border-radius:7px;"></div>
<div class="r" style="left:1810.00px;top:559.20px;width:2.00px;height:48.40px;background:#c9c9c9;"></div>
<div class="r" style="left:1848.50px;top:559.20px;width:2.00px;height:48.40px;background:#c9c9c9;"></div>
<svg class="r" style="left:1822.25px;top:578.10px;width:16.00px;height:8.00px;" viewBox="0 0 16 9" preserveAspectRatio="none"><path fill="#262626" d="M0 0 H16 L8 9 Z"/></svg>
<svg class="r" style="left:1861.05px;top:570.90px;width:26.00px;height:25.00px;" viewBox="0 0 26 26" preserveAspectRatio="none"><circle cx="13" cy="13" r="10.9" fill="none" stroke="#262626" stroke-width="2.8"/><path d="M9.2 9.2 L16.8 16.8 M16.8 9.2 L9.2 16.8" stroke="#262626" stroke-width="2.7"/></svg>
<div class="r" style="left:1981.00px;top:559.20px;width:113.40px;height:48.40px;background:#ffffff;box-sizing:border-box;border:2px solid #c9c9c9;border-radius:7px;"></div>
<div class="r" style="left:2122.00px;top:559.20px;width:127.20px;height:48.40px;background:#ffffff;box-sizing:border-box;border:2px solid #c9c9c9;border-radius:7px;"></div>
<div class="r" style="left:2166.30px;top:559.20px;width:2.00px;height:48.40px;background:#c9c9c9;"></div>
<div class="t" style="left:2132.60px;top:570.89px;font-size:26px;line-height:26px;color:#262626;transform:scaleX(0.7963);transform-origin:0 0;">Ja</div>
<div class="t" style="left:2180.63px;top:570.89px;font-size:26px;line-height:26px;color:#262626;transform:scaleX(1.0854);transform-origin:0 0;">Nein</div>
<div class="r" style="left:2257.50px;top:559.20px;width:49.50px;height:48.40px;background:#ffffff;box-sizing:border-box;border:2px solid #c9c9c9;border-radius:7px;"></div>
<svg class="r" style="left:2269.75px;top:570.90px;width:25.00px;height:25.00px;" viewBox="0 0 26 26" preserveAspectRatio="none"><circle cx="13" cy="13" r="10.9" fill="none" stroke="#262626" stroke-width="2.8"/><path d="M9.2 9.2 L16.8 16.8 M16.8 9.2 L9.2 16.8" stroke="#262626" stroke-width="2.7"/></svg>
<div class="r" style="left:2352.00px;top:559.20px;width:127.30px;height:48.40px;background:#ffffff;box-sizing:border-box;border:2px solid #c9c9c9;border-radius:7px;"></div>
<div class="r" style="left:2395.90px;top:559.20px;width:2.00px;height:48.40px;background:#c9c9c9;"></div>
<div class="t" style="left:2362.60px;top:570.89px;font-size:26px;line-height:26px;color:#262626;transform:scaleX(0.7963);transform-origin:0 0;">Ja</div>
<div class="t" style="left:2410.23px;top:570.89px;font-size:26px;line-height:26px;color:#262626;transform:scaleX(1.0854);transform-origin:0 0;">Nein</div>
<div class="r" style="left:2487.60px;top:559.20px;width:50.00px;height:48.40px;background:#ffffff;box-sizing:border-box;border:2px solid #c9c9c9;border-radius:7px;"></div>
<svg class="r" style="left:2500.10px;top:570.90px;width:25.00px;height:25.00px;" viewBox="0 0 26 26" preserveAspectRatio="none"><circle cx="13" cy="13" r="10.9" fill="none" stroke="#262626" stroke-width="2.8"/><path d="M9.2 9.2 L16.8 16.8 M16.8 9.2 L9.2 16.8" stroke="#262626" stroke-width="2.7"/></svg>
<div class="r" style="left:2684.00px;top:559.20px;width:240.00px;height:48.40px;background:#ffffff;box-sizing:border-box;border:2px solid #c9c9c9;border-radius:7px;"></div>
<div class="r" style="left:1544.50px;top:662.40px;width:353.80px;height:49.00px;background:#ffffff;box-sizing:border-box;border:2px solid #c9c9c9;border-radius:7px;"></div>
<div class="r" style="left:1546px;top:664px;width:207.5px;height:45px;overflow:hidden;">
<div class="t" style="left:10.70px;top:11.04px;font-size:27px;line-height:27px;color:#444444;transform:scaleX(0.9349);transform-origin:0 0;">ANDRÉANI Kyros</div>
</div>
<div class="r" style="left:1760.80px;top:662.40px;width:2.00px;height:49.00px;background:#c9c9c9;"></div>
<div class="r" style="left:1799.80px;top:662.40px;width:2.00px;height:49.00px;background:#c9c9c9;"></div>
<div class="r" style="left:1847.50px;top:662.40px;width:2.00px;height:49.00px;background:#c9c9c9;"></div>
<svg class="r" style="left:1772.70px;top:681.30px;width:16.30px;height:8.70px;" viewBox="0 0 16 9" preserveAspectRatio="none"><path fill="#262626" d="M0 0 H16 L8 9 Z"/></svg>
<svg class="r" style="left:1811.90px;top:675.00px;width:25.20px;height:25.30px;" viewBox="0 0 32 32" preserveAspectRatio="none"><g fill="none" stroke="#262626" stroke-width="3.6"><path d="M1.9 16 A13.6 13.6 0 0 1 26 7.4"/><path d="M29.1 16 A13.6 13.6 0 0 1 5 24.6"/></g><path fill="#262626" d="M29 0 V10.8 H18 Z"/><path fill="#262626" d="M2 32 V21.2 H13 Z"/></svg>
<svg class="r" style="left:1860.80px;top:675.30px;width:25.20px;height:25.00px;" viewBox="0 0 26 26" preserveAspectRatio="none"><circle cx="13" cy="13" r="10.9" fill="none" stroke="#262626" stroke-width="2.8"/><path d="M9.2 9.2 L16.8 16.8 M16.8 9.2 L9.2 16.8" stroke="#262626" stroke-width="2.7"/></svg>
<div class="r" style="left:840.00px;top:738.60px;width:2097.00px;height:218.90px;background:#ffffff;"></div>
<div class="r" style="left:840.00px;top:738.60px;width:2097.00px;height:19.40px;background:linear-gradient(rgba(0,0,0,0.06),rgba(0,0,0,0));"></div>
<div class="r" style="left:853.30px;top:757.10px;width:49.40px;height:48.60px;background:#ffffff;box-sizing:border-box;border:2px solid #c9c9c9;border-radius:7px;"></div>
<svg class="r" style="left:865.00px;top:770.20px;width:26.00px;height:26.00px;" viewBox="0 0 26 26" preserveAspectRatio="none"><circle cx="10.9" cy="10.6" r="9.15" fill="none" stroke="#262626" stroke-width="3.2"/><path d="M17 16.7 L24.6 24.3" stroke="#262626" stroke-width="3.7" stroke-linecap="square"/></svg>
<div class="t" style="left:916.57px;top:769.74px;font-size:27px;line-height:27px;color:#262626;transform:scaleX(0.9831);transform-origin:0 0;">2023.03.15</div>
<div class="t" style="left:1292.78px;top:769.74px;font-size:27px;line-height:27px;color:#262626;transform:scaleX(0.9751);transform-origin:0 0;">2:10</div>
<div class="t" style="left:1543.52px;top:769.64px;font-size:27px;line-height:27px;color:#262626;transform:scaleX(1.0201);transform-origin:0 0;">903-Untersuchung und</div>
<div class="t" style="left:1542.47px;top:801.74px;font-size:27px;line-height:27px;color:#262626;transform:scaleX(1.0350);transform-origin:0 0;">Behandlung</div>
<div class="t" style="left:2681.12px;top:769.54px;font-size:27px;line-height:27px;color:#262626;transform:scaleX(1.0583);transform-origin:0 0;">Nein</div>
<div class="t" style="left:916.63px;top:850.84px;font-size:27px;line-height:27px;color:#262626;transform:scaleX(0.9355);transform-origin:0 0;">20:00 - ALAR. - C-96</div>
<div class="t" style="left:1542.73px;top:850.64px;font-size:27px;line-height:27px;color:#262626;transform:scaleX(0.9189);transform-origin:0 0;">LAR.. Aïc..</div>
<div class="t" style="left:2119.98px;top:850.64px;font-size:27px;line-height:27px;color:#262626;transform:scaleX(1.0291);transform-origin:0 0;">Nein</div>
<div class="t" style="left:2348.40px;top:850.24px;font-size:27px;line-height:27px;color:#262626;transform:scaleX(0.7929);transform-origin:0 0;">Ja</div>
<div class="t" style="left:1545.00px;top:900.64px;font-size:27px;line-height:27px;color:#262626;transform:scaleX(0.9349);transform-origin:0 0;">ANDRÉANI Kyros</div>
<div class="r" style="left:840.00px;top:956.70px;width:2097.00px;height:1.60px;background:#dddddd;"></div>
<div class="r" style="left:840.00px;top:958.30px;width:2097.00px;height:245.90px;background:#f4f4f4;"></div>
<div class="r" style="left:853.30px;top:971.40px;width:49.40px;height:48.60px;background:#ffffff;box-sizing:border-box;border:2px solid #c9c9c9;border-radius:7px;"></div>
<svg class="r" style="left:865.00px;top:984.50px;width:26.00px;height:26.00px;" viewBox="0 0 26 26" preserveAspectRatio="none"><circle cx="10.9" cy="10.6" r="9.15" fill="none" stroke="#262626" stroke-width="3.2"/><path d="M17 16.7 L24.6 24.3" stroke="#262626" stroke-width="3.7" stroke-linecap="square"/></svg>
<div class="t" style="left:916.57px;top:983.44px;font-size:27px;line-height:27px;color:#262626;transform:scaleX(0.9846);transform-origin:0 0;">2023.03.05</div>
<div class="t" style="left:1293.03px;top:983.44px;font-size:27px;line-height:27px;color:#262626;transform:scaleX(0.9703);transform-origin:0 0;">3:30</div>
<div class="t" style="left:1543.75px;top:983.44px;font-size:27px;line-height:27px;color:#1d9ab4;transform:scaleX(1.0003);transform-origin:0 0;">7625-Sonn-und</div>
<div class="t" style="left:1542.81px;top:1015.44px;font-size:27px;line-height:27px;color:#1d9ab4;transform:scaleX(0.9746);transform-origin:0 0;">Feiertagstzulage KLV</div>
<div class="t" style="left:2049.74px;top:983.44px;font-size:27px;line-height:27px;color:#262626;transform:scaleX(1.0058);transform-origin:0 0;">210</div>
<div class="t" style="left:2680.20px;top:983.44px;font-size:27px;line-height:27px;color:#262626;transform:scaleX(0.8071);transform-origin:0 0;">Ja</div>
<div class="t" style="left:916.87px;top:1065.44px;font-size:27px;line-height:27px;color:#262626;transform:scaleX(0.9283);transform-origin:0 0;">08:00 - ALAR. - C-</div>
<div class="t" style="left:915.78px;top:1097.14px;font-size:27px;line-height:27px;color:#262626;transform:scaleX(1.0104);transform-origin:0 0;">108,prestations privées-510</div>
<div class="t" style="left:1542.73px;top:1066.44px;font-size:27px;line-height:27px;color:#262626;transform:scaleX(0.9189);transform-origin:0 0;">LAR.. Aïc..</div>
<div class="t" style="left:2118.97px;top:1065.84px;font-size:27px;line-height:27px;color:#262626;transform:scaleX(1.0796);transform-origin:0 0;">Nein</div>
<div class="t" style="left:2348.58px;top:1065.84px;font-size:27px;line-height:27px;color:#262626;transform:scaleX(1.0738);transform-origin:0 0;">Nein</div>
<div class="t" style="left:1545.00px;top:1147.04px;font-size:27px;line-height:27px;color:#262626;transform:scaleX(0.9349);transform-origin:0 0;">ANDRÉANI Kyros</div>
<div class="r" style="left:1511.80px;top:965.90px;width:418.90px;height:96.30px;box-sizing:border-box;border:5px solid #d80ee8;border-radius:13px;box-shadow:-1px 3px 5px rgba(0,0,0,0.35);"></div>
<div class="r" style="left:840.00px;top:1204.20px;width:2097.00px;height:1.60px;background:#dddddd;"></div>
<div class="r" style="left:840.00px;top:1205.80px;width:2097.00px;height:226.20px;background:#ffffff;"></div>
<div class="r" style="left:853.30px;top:1218.40px;width:49.40px;height:48.60px;background:#ffffff;box-sizing:border-box;border:2px solid #c9c9c9;border-radius:7px;"></div>
<svg class="r" style="left:865.00px;top:1231.50px;width:26.00px;height:26.00px;" viewBox="0 0 26 26" preserveAspectRatio="none"><circle cx="10.9" cy="10.6" r="9.15" fill="none" stroke="#262626" stroke-width="3.2"/><path d="M17 16.7 L24.6 24.3" stroke="#262626" stroke-width="3.7" stroke-linecap="square"/></svg>
<div class="t" style="left:916.57px;top:1230.34px;font-size:27px;line-height:27px;color:#262626;transform:scaleX(0.9864);transform-origin:0 0;">2023.03.19</div>
<div class="t" style="left:1293.03px;top:1230.34px;font-size:27px;line-height:27px;color:#262626;transform:scaleX(0.9703);transform-origin:0 0;">3:30</div>
<div class="t" style="left:1543.75px;top:1230.34px;font-size:27px;line-height:27px;color:#1d9ab4;transform:scaleX(1.0003);transform-origin:0 0;">7625-Sonn-und</div>
<div class="t" style="left:1542.81px;top:1262.34px;font-size:27px;line-height:27px;color:#1d9ab4;transform:scaleX(0.9746);transform-origin:0 0;">Feiertagstzulage KLV</div>
<div class="t" style="left:2049.74px;top:1230.34px;font-size:27px;line-height:27px;color:#262626;transform:scaleX(1.0058);transform-origin:0 0;">210</div>
<div class="t" style="left:2680.20px;top:1230.34px;font-size:27px;line-height:27px;color:#262626;transform:scaleX(0.8071);transform-origin:0 0;">Ja</div>
<div class="t" style="left:916.87px;top:1311.54px;font-size:27px;line-height:27px;color:#262626;transform:scaleX(0.9283);transform-origin:0 0;">08:00 - ALAR. - C-</div>
<div class="t" style="left:915.78px;top:1344.84px;font-size:27px;line-height:27px;color:#262626;transform:scaleX(1.0104);transform-origin:0 0;">108,prestations privées-510</div>
<div class="t" style="left:1542.73px;top:1311.54px;font-size:27px;line-height:27px;color:#262626;transform:scaleX(0.9189);transform-origin:0 0;">LAR.. Aïc..</div>
<div class="t" style="left:2118.97px;top:1311.94px;font-size:27px;line-height:27px;color:#262626;transform:scaleX(1.0796);transform-origin:0 0;">Nein</div>
<div class="t" style="left:2348.58px;top:1311.94px;font-size:27px;line-height:27px;color:#262626;transform:scaleX(1.0738);transform-origin:0 0;">Nein</div>
<div class="t" style="left:1545.00px;top:1393.54px;font-size:27px;line-height:27px;color:#262626;transform:scaleX(0.9349);transform-origin:0 0;">ANDRÉANI Kyros</div>
<div class="r" style="left:1511.80px;top:1211.80px;width:418.90px;height:96.10px;box-sizing:border-box;border:5px solid #d80ee8;border-radius:13px;box-shadow:-1px 3px 5px rgba(0,0,0,0.35);"></div>
</body></html>
